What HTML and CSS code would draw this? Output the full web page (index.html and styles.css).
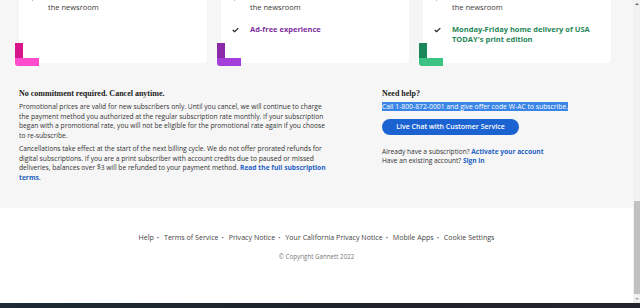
FILE: index.html
```html
<!DOCTYPE html>
<html lang="en">
<head>
    <meta charset="UTF-8">
    <meta name="viewport" content="width=device-width, initial-scale=1.0">
    <title>USA TODAY - Subscribe</title>
    <link rel="stylesheet" href="styles.css">
</head>
<body>
    <div class="screen">
        <div class="viewport">
            <div class="page">
                <section class="plans">
                    <div class="cards">
                        <div class="card pink">
                            <ul class="perks">
                                <li>
                                    <svg class="check" viewBox="0 0 8 6"><polyline points="0.8,3 3,5 7.2,0.8"/></svg>
                                    <span>Unlimited access to conversations with the newsroom</span>
                                </li>
                            </ul>
                            <svg class="corner" viewBox="0 0 24 23"><path class="dark" d="M0 0h8v18H0z"/><path class="light" d="M0 15h24v8H3a3 3 0 0 1-3-3z"/></svg>
                        </div>
                        <div class="card purple">
                            <ul class="perks">
                                <li>
                                    <svg class="check" viewBox="0 0 8 6"><polyline points="0.8,3 3,5 7.2,0.8"/></svg>
                                    <span>Unlimited access to conversations with the newsroom</span>
                                </li>
                                <li class="extra">
                                    <svg class="check" viewBox="0 0 8 6"><polyline points="0.8,3 3,5 7.2,0.8"/></svg>
                                    <span>Ad-free experience</span>
                                </li>
                            </ul>
                            <svg class="corner" viewBox="0 0 24 23"><path class="dark" d="M0 0h8v18H0z"/><path class="light" d="M0 15h24v8H3a3 3 0 0 1-3-3z"/></svg>
                        </div>
                        <div class="card green">
                            <ul class="perks">
                                <li>
                                    <svg class="check" viewBox="0 0 8 6"><polyline points="0.8,3 3,5 7.2,0.8"/></svg>
                                    <span>Unlimited access to conversations with the newsroom</span>
                                </li>
                                <li class="extra">
                                    <svg class="check" viewBox="0 0 8 6"><polyline points="0.8,3 3,5 7.2,0.8"/></svg>
                                    <span>Monday-Friday home delivery of USA TODAY's print edition</span>
                                </li>
                            </ul>
                            <svg class="corner" viewBox="0 0 24 23"><path class="dark" d="M0 0h8v18H0z"/><path class="light" d="M0 15h24v8H3a3 3 0 0 1-3-3z"/></svg>
                        </div>
                    </div>

                    <div class="info">
                        <div class="terms">
                            <h2>No commitment required. Cancel anytime.</h2>
                            <p>Promotional prices are valid for new subscribers only. Until you cancel, we will continue to charge the payment method you authorized at the regular subscription rate monthly. If your subscription began with a promotional rate, you will not be eligible for the promotional rate again if you choose to re-subscribe.</p>
                            <p>Cancellations take effect at the start of the next billing cycle. We do not offer prorated refunds for digital subscriptions. If you are a print subscriber with account credits due to paused or missed deliveries, balances over $3 will be refunded to your payment method. <a href="#">Read the full subscription terms.</a></p>
                        </div>
                        <div class="help">
                            <h2>Need help?</h2>
                            <p class="phone"><span class="selected">Call 1-800-872-0001 and give offer code W-AC to subscribe.</span></p>
                            <button type="button" class="chat-btn">Live Chat with Customer Service</button>
                            <p class="account">Already have a subscription? <a href="#">Activate your account</a></p>
                            <p class="account">Have an existing account? <a href="#">Sign in</a></p>
                        </div>
                    </div>
                </section>

                <footer class="footer">
                    <nav class="footer-links">
                        <a href="#">Help</a><span class="dot">•</span>
                        <a href="#">Terms of Service</a><span class="dot">•</span>
                        <a href="#">Privacy Notice</a><span class="dot">•</span>
                        <a href="#">Your California Privacy Notice</a><span class="dot">•</span>
                        <a href="#">Mobile Apps</a><span class="dot">•</span>
                        <a href="#">Cookie Settings</a>
                    </nav>
                    <p class="copyright">© Copyright Gannett 2022</p>
                </footer>
            </div>

            <div class="scrollbar">
                <span class="arrow up"></span>
                <div class="track"><div class="thumb"></div></div>
                <span class="arrow down"></span>
            </div>
        </div>
        <div class="taskbar"></div>
    </div>
</body>
</html>
```

FILE: styles.css
```css
* { box-sizing: border-box; }
body {
    margin: 0;
    width: 640px;
    height: 308px;
    overflow: hidden;
    font-family: 'Open Sans', 'Liberation Sans', sans-serif;
    color: #303030;
}
.screen {
    display: flex;
    flex-direction: column;
    height: 308px;
}
.viewport {
    display: flex;
    height: 303px;
    overflow: hidden;
}
.page {
    width: 633px;
    overflow: hidden;
}

/* plans area */
.plans {
    background: #f6f6f6;
    height: 208px;
    padding: 0 22px 0 19px;
    overflow: hidden;
}
.cards {
    display: flex;
    gap: 14px;
    margin-top: -22px;
}
.card {
    position: relative;
    width: 188px;
    background: #fff;
    border-radius: 4px;
    padding: 14px 14px 19px 11px;
}
.perks {
    list-style: none;
    margin: 0;
    padding: 0;
}
.perks li {
    display: flex;
    align-items: flex-start;
    gap: 11px;
    font-size: 7.5px;
    line-height: 10px;
    color: #3a3a3a;
}
.perks li.extra {
    margin-top: 12px;
    font-weight: 700;
}
.check {
    flex: none;
    width: 7px;
    height: 6px;
    margin-top: 3px;
    fill: none;
    stroke: #222;
    stroke-width: 1.4;
}
.purple .extra { color: #7c2f9e; }
.green .extra { color: #1f8758; }
.corner {
    position: absolute;
    left: -4px;
    bottom: -3px;
    width: 24px;
    height: 23px;
}
.pink .dark { fill: #d8168c; }
.pink .light { fill: #ff4ccd; }
.purple .dark { fill: #8b2aa9; }
.purple .light { fill: #a43fdc; }
.green .dark { fill: #1a8858; }
.green .light { fill: #3cc283; }

.info {
    display: flex;
    margin-top: 25px;
}
.terms { width: 310px; }
.help { margin-left: 53px; }
h2 {
    font-family: 'Liberation Serif', 'DejaVu Serif', serif;
    font-size: 8px;
    line-height: 12px;
    font-weight: 700;
    color: #1a1a1a;
    margin: 0;
}
.terms p {
    margin: 4px 0 0;
    font-size: 6.7px;
    line-height: 9.5px;
    color: #333;
}
.terms h2 + p { margin-top: 2px; }
a {
    color: #2562c4;
    font-weight: 700;
    text-decoration: none;
}
.phone {
    margin: 2px 0 0;
    font-size: 6.8px;
    line-height: 9.5px;
}
.selected {
    background: #3a85e6;
    color: #fff;
}
.chat-btn {
    display: block;
    margin-top: 7px;
    width: 137px;
    height: 16px;
    border: none;
    border-radius: 8px;
    background: #1c63d2;
    color: #fff;
    font-family: 'Open Sans', 'Liberation Sans', sans-serif;
    font-size: 7px;
    font-weight: 600;
    cursor: pointer;
}
.account {
    margin: 0;
    font-size: 6.6px;
    line-height: 9px;
    color: #333;
}
.chat-btn + .account { margin-top: 12px; }

/* footer */
.footer {
    background: #fff;
    height: 95px;
    padding-top: 24px;
    text-align: center;
}
.footer-links {
    font-size: 7.1px;
    line-height: 10px;
}
.footer-links a {
    color: #444;
    font-weight: 400;
}
.dot {
    margin: 0 3px;
    color: #555;
    font-size: 6px;
}
.copyright {
    margin: 9px 0 0;
    font-size: 6.2px;
    color: #777;
}

/* browser chrome */
.scrollbar {
    width: 7px;
    background: #f1f1f1;
    display: flex;
    flex-direction: column;
    align-items: center;
}
.arrow {
    width: 0;
    height: 0;
    border-left: 2px solid transparent;
    border-right: 2px solid transparent;
    margin: 3px 0;
}
.arrow.up { border-bottom: 2px solid #666; }
.arrow.down { border-top: 2px solid #a0a0a0; }
.track {
    flex: 1;
    width: 100%;
    padding-top: 193px;
    padding-bottom: 1px;
}
.thumb {
    height: 100%;
    background: #c1c1c1;
    margin: 0 0.5px;
}
.taskbar {
    height: 5px;
    background: linear-gradient(90deg, #1c2a33, #1e2128 60%, #22252b);
}
```
